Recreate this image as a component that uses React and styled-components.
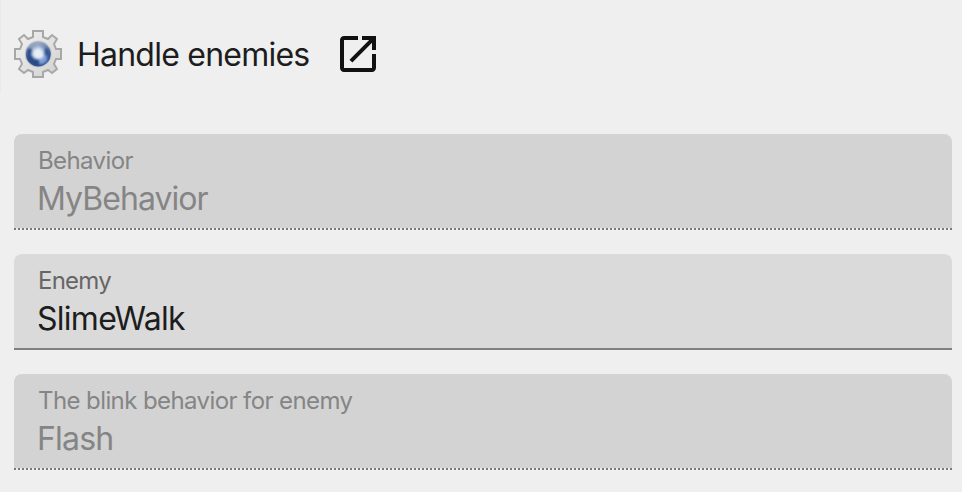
import React from "react";
import styled, { createGlobalStyle } from "styled-components";

const GlobalStyle = createGlobalStyle`
  * { box-sizing: border-box; }
  body { margin: 0; background: #efefef; overflow: hidden; }
`;

const Panel = styled.main`
  width: 962px;
  height: 492px;
  background: #efefef;
  font-family: Inter, sans-serif;
  font-weight: 400;
  color: #1d1d1d;
`;

const Header = styled.header`
  display: flex;
  align-items: center;
  height: 92px;
  padding: 16px 0 0 13px;
  border-left: 1px solid #eaeaea;
  margin-bottom: 42px;
`;

const Title = styled.h1`
  margin: 0 25px 0 15px;
  padding-top: 2px;
  width: 232px;
  font-size: 32px;
  font-weight: 400;
  line-height: 40px;
  letter-spacing: -0.77px;
  white-space: nowrap;
`;

const LaunchButton = styled.button`
  display: flex;
  padding: 0;
  border: 0;
  background: none;
  color: #111;
`;

const Fields = styled.section`
  display: flex;
  flex-direction: column;
  gap: 24px;
  padding: 0 10px 0 14px;
`;

const Field = styled.div`
  height: 96px;
  padding: 12px 24px 0;
  border-radius: 8px 8px 0 0;
  color: ${(p) => (p.$disabled ? "#858585" : "#1d1d1d")};
  background:
    ${(p) =>
      p.$disabled
        ? "repeating-linear-gradient(90deg, #797979 0 2px, #efefef 2px 4px)"
        : "linear-gradient(#808080, #808080)"}
      left bottom / 100% 2px no-repeat,
    ${(p) => (p.$disabled ? "#d3d3d3" : "#dadada")};
`;

const Label = styled.div`
  height: 30px;
  font-size: 24px;
  line-height: 30px;
  letter-spacing: ${(p) => p.$tracking}px;
  color: ${(p) => (p.$disabled ? "#858585" : "#666")};
`;

const Value = styled.div`
  margin-left: -1px;
  font-size: 32px;
  line-height: 46px;
  letter-spacing: ${(p) => p.$tracking}px;
`;

const GearSvg = styled.svg`
  display: block;
  flex: none;
`;

const Soft = styled.g`
  filter: blur(${(p) => p.$radius}px);
`;

function GearIcon() {
  return (
    <GearSvg width="48" height="48" viewBox="0 0 48 48">
      <defs>
        <linearGradient id="metal" x1="0" y1="0" x2="1" y2="1">
          <stop offset="0" stopColor="#f0f0f0" />
          <stop offset="0.5" stopColor="#e2e2e2" />
          <stop offset="1" stopColor="#d0d0d0" />
        </linearGradient>
        <linearGradient id="lens" x1="0" y1="0" x2="0.2" y2="1">
          <stop offset="0" stopColor="#b3b9c4" />
          <stop offset="0.3" stopColor="#7f93b8" />
          <stop offset="0.65" stopColor="#385a9b" />
          <stop offset="1" stopColor="#31528f" />
        </linearGradient>
      </defs>
      <Soft $radius={0.7}>
        <path
          d="M19 1H29V7L34 9L38 5L43 9L40 14L42 19H47V29H42L40 34L43 39L38 43L34 40L29 42V47H19V42L14 40L10 43L5 39L8 34L6 29H1V19H6L8 14L5 9L10 5L14 9L19 7Z"
          fill="url(#metal)"
          stroke="#a8a8a8"
          strokeWidth="2"
        />
        <circle cx="24.3" cy="24" r="13.6" fill="#c9cbce" />
        <circle cx="24.3" cy="24" r="12.4" fill="url(#lens)" />
      </Soft>
      <Soft $radius={1.1}>
        <path d="M13.5 19V28L18 34L25 35V31L19 27V19Z" fill="#294983" />
        <path d="M31 18L35 20V27L32 32L29 29Z" fill="#355590" />
        <path d="M25 29L33 25V31L29 34H25Z" fill="#7d9edb" />
        <path d="M18 18L24 15L30 18L31 26L27 30L20 29L17 25Z" fill="#acbedb" />
        <path d="M20 20L25 18L29 22V27L23 29L19 25Z" fill="#e9eef4" />
      </Soft>
    </GearSvg>
  );
}

function LaunchIcon() {
  return (
    <svg width="48" height="48" viewBox="0 0 24 24" fill="currentColor">
      <path d="M19 19H5V5h7V3H5c-1.11 0-2 .9-2 2v14c0 1.1.89 2 2 2h14c1.1 0 2-.9 2-2v-7h-2v7zM14 3v2h3.59l-9.83 9.83 1.41 1.41L19 6.41V10h2V3h-7z" />
    </svg>
  );
}

const fields = [
  { label: "Behavior", value: "MyBehavior", disabled: true, labelTracking: -0.6, valueTracking: -0.95 },
  { label: "Enemy", value: "SlimeWalk", disabled: false, labelTracking: -0.75, valueTracking: -0.72 },
  { label: "The blink behavior for enemy", value: "Flash", disabled: true, labelTracking: -0.59, valueTracking: -0.8 },
];

export default function App() {
  return (
    <>
      <GlobalStyle />
      <Panel>
        <Header>
          <GearIcon />
          <Title>Handle enemies</Title>
          <LaunchButton aria-label="Open">
            <LaunchIcon />
          </LaunchButton>
        </Header>
        <Fields>
          {fields.map((f) => (
            <Field key={f.label} $disabled={f.disabled}>
              <Label $disabled={f.disabled} $tracking={f.labelTracking}>{f.label}</Label>
              <Value $tracking={f.valueTracking}>{f.value}</Value>
            </Field>
          ))}
        </Fields>
      </Panel>
    </>
  );
}
